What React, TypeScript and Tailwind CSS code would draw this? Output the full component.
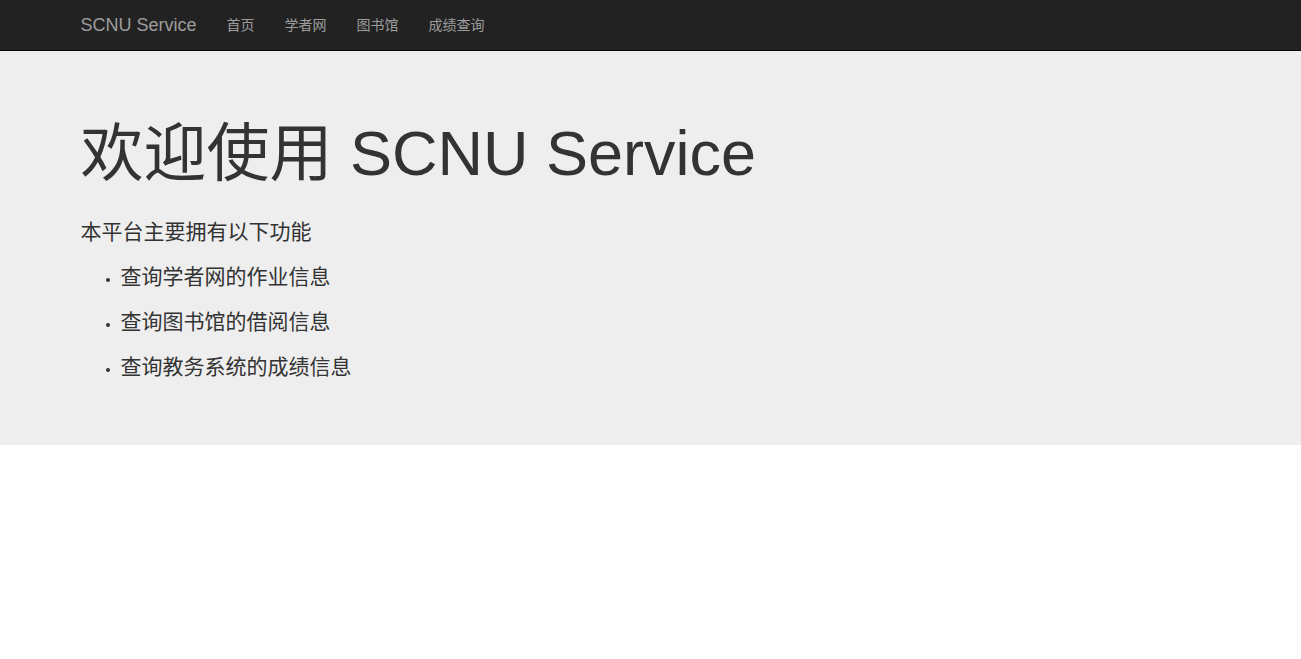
import React from 'react';

const links = ['首页', '学者网', '图书馆', '成绩查询'];

const features = ['查询学者网的作业信息', '查询图书馆的借阅信息', '查询教务系统的成绩信息'];

const App = () => {
  return (
    <div className="min-h-screen bg-white text-[#333] text-[14px] font-['Liberation_Sans','Noto_Sans_CJK_SC',sans-serif]">
      {/* Navbar */}
      <nav className="bg-[#222] border-b border-[#080808]">
        <div className="w-[1170px] mx-auto px-[15px] flex h-[50px]">
          <a href="#" className="-ml-[15px] px-[15px] flex items-center text-[18px] text-[#9d9d9d] leading-[20px]">
            SCNU Service
          </a>
          <ul className="flex">
            {links.map((l) => (
              <li key={l}>
                <a href="#" className="px-[15px] h-[50px] flex items-center text-[14px] text-[#9d9d9d] leading-[20px]">
                  {l}
                </a>
              </li>
            ))}
          </ul>
        </div>
      </nav>

      {/* Jumbotron */}
      <section className="bg-[#eee] pt-[48px] pb-[48px]">
        <div className="w-[1170px] mx-auto px-[15px]">
          <h1 className="mt-[20px] mb-[29px] text-[63px] leading-[69px] h-[69px]">欢迎使用 SCNU Service</h1>
          <p className="text-[21px] leading-[30px] mb-[15px]">本平台主要拥有以下功能</p>
          <ul className="list-disc pl-[40px]">
            {features.map((f) => (
              <li key={f}>
                <p className="text-[21px] leading-[30px] mb-[15px]">{f}</p>
              </li>
            ))}
          </ul>
        </div>
      </section>
    </div>
  );
};

export default App;
